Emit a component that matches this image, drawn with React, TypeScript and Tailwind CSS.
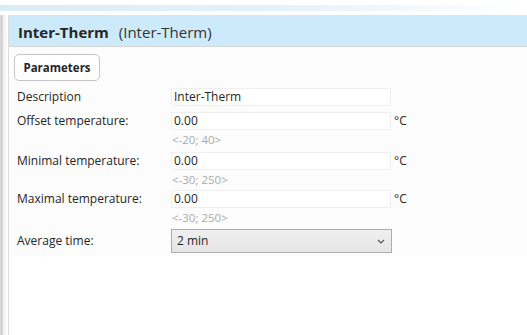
function Row({ label, value, hint, unit }: { label: string; value: string; hint?: string; unit?: boolean }) {
  return (
    <div className="flex flex-col">
      <div className="flex items-center h-[18px]">
        <div className="w-[157px] shrink-0 pl-[3px]">{label}</div>
        <div className="w-[220px] h-[18px] border border-[#efefef] bg-white px-[2px] flex items-center leading-none">{value}</div>
        {unit && <div className="pl-[3px]">°C</div>}
      </div>
      {hint && <div className="ml-[158px] text-[11.5px] text-[#ababab] leading-[20px] h-[20px]">{hint}</div>}
    </div>
  );
}

export default function App() {
  return (
    <div className="w-[527px] h-[335px] bg-white overflow-hidden flex flex-col text-[12px] text-[#262626] font-['Open_Sans',sans-serif]">
      <div className="h-[15px] shrink-0 flex flex-col pt-[5px]">
        <div className="h-[6px] bg-gradient-to-r from-[#dcecf6] via-[#e4f1f9] to-white" />
      </div>
      <div className="flex flex-1 min-h-0">
        <div className="w-[8px] shrink-0 flex">
          <div className="w-[3px] bg-[#d6d6d6]" />
          <div className="w-[3px] bg-[#f4f4f4]" />
        </div>
        <div className="flex-1 flex flex-col border-l border-[#dcdcdc]">
          <div className="h-[32px] shrink-0 bg-[#cdeafb] border-b border-[#d8d8d8] flex items-baseline pl-[9px] pt-[6px]">
            <span className="font-bold text-[15px]">Inter-Therm</span>
            <span className="ml-[10px] text-[15px] text-[#333]">(Inter-Therm)</span>
          </div>
          <div className="bg-[#fcfcfc] pl-[5px] pt-[7px] pb-[3px] flex flex-col">
            <div className="w-[86px] h-[27px] border border-[#c6c6c6] rounded-[5px] bg-white flex items-center justify-center font-bold text-[11.5px]">
              Parameters
            </div>
            <div className="mt-[7px] flex flex-col gap-[6px]">
              <Row label="Description" value="Inter-Therm" />
              <Row label="Offset temperature:" value="0.00" hint="<-20; 40>" unit />
            </div>
            <div className="mt-[2px] flex flex-col">
              <Row label="Minimal temperature:" value="0.00" hint="<-30; 250>" unit />
              <Row label="Maximal temperature:" value="0.00" hint="<-30; 250>" unit />
              <div className="flex items-center h-[24px] mt-[1px]">
                <div className="w-[157px] shrink-0 pl-[3px]">Average time:</div>
                <div className="w-[221px] h-[24px] border border-[#adadad] bg-gradient-to-b from-[#f0f0f0] to-[#e5e5e5] flex items-center justify-between pl-[5px] pr-[6px]">
                  <span>2 min</span>
                  <svg width="8" height="5" viewBox="0 0 8 5" fill="none" stroke="#555" strokeWidth="1.2">
                    <path d="M1 1l3 3 3-3" />
                  </svg>
                </div>
              </div>
            </div>
          </div>
          <div className="flex-1 bg-white" />
        </div>
      </div>
    </div>
  );
}
